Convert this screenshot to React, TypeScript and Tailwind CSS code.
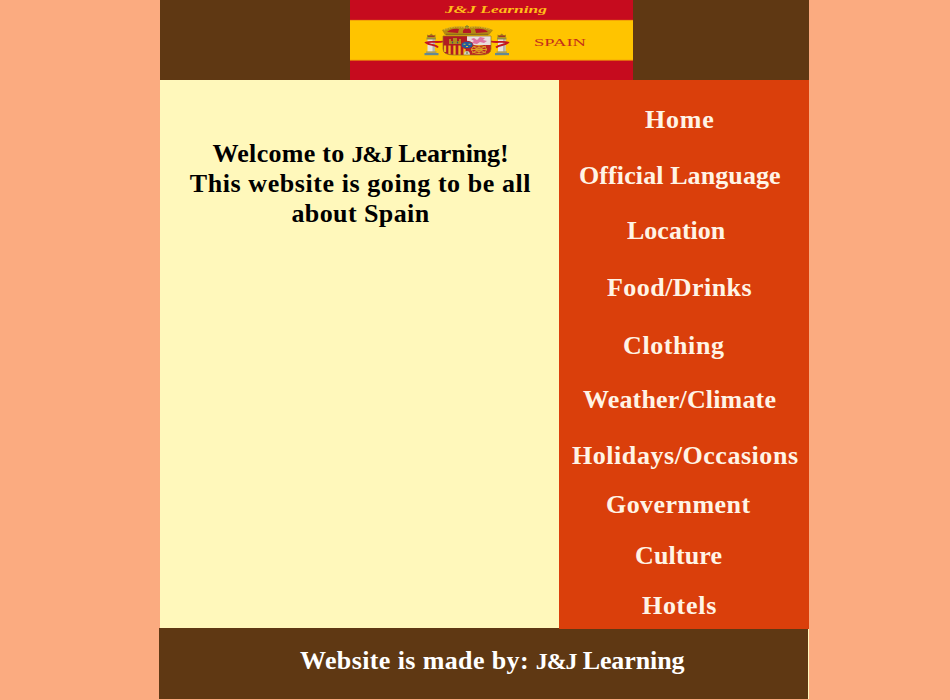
const navItems = [
  { label: 'Home', place: 'mt-[25px] pl-[86px] tracking-[0.8px]' },
  { label: 'Official Language', place: 'mt-[26px] pl-[20px] tracking-[0.1px]' },
  { label: 'Location', place: 'mt-[25px] pl-[68px]' },
  { label: 'Food/Drinks', place: 'mt-[27px] pl-[48px] tracking-[0.45px]' },
  { label: 'Clothing', place: 'mt-[28px] pl-[64px] tracking-[0.6px]' },
  { label: 'Weather/Climate', place: 'mt-[24px] pl-[24px] tracking-[0.17px]' },
  { label: 'Holidays/Occasions', place: 'mt-[26px] pl-[13px] tracking-[0.55px]' },
  { label: 'Government', place: 'mt-[19px] pl-[47px] tracking-[0.45px]' },
  { label: 'Culture', place: 'mt-[21px] pl-[76px] tracking-[0.15px]' },
  { label: 'Hotels', place: 'mt-[20px] pl-[83px] tracking-[0.7px]' },
];

function Pillar() {
  return (
    <g>
      <rect x="4" y="9" width="7.5" height="13" fill="#e6e3dc" />
      <rect x="9" y="9" width="2.5" height="13" fill="#b5b5b0" />
      <rect x="3" y="7.5" width="9.5" height="2" fill="#98903f" />
      <path d="M3.5 7.5V4.5L5.5 5.5L7.8 3.5L10 5.5L12 4.5V7.5Z" fill="#a88418" />
      <path d="M4.5 6.2H11" stroke="#a3152b" strokeWidth="1" />
      <rect x="2.5" y="21.3" width="10.5" height="1.7" fill="#b1a052" />
      <rect x="1" y="23" width="14" height="2.2" fill="#628995" />
    </g>
  );
}

function Flag() {
  return (
    <svg className="block h-20 w-[283px]" viewBox="0 0 283 80">
      <rect width="283" height="80" fill="#c60b1e" />
      <rect y="20" width="283" height="40.3" fill="#ffc400" />
      <path d="M0 20.3H283M0 60.2H283" stroke="#ee8b0b" strokeWidth="0.7" />
      <text x="95" y="13" textLength="102" lengthAdjust="spacingAndGlyphs" fill="#ffbd1a" className="font-['Liberation_Serif',serif] text-[10px] font-bold italic">J&amp;J Learning</text>
      <text x="184" y="46.3" textLength="52" lengthAdjust="spacingAndGlyphs" fill="#c52f1b" className="font-['Liberation_Serif',serif] text-[10px] font-normal">SPAIN</text>
      <g transform="translate(73.5 30)"><Pillar /></g>
      <g transform="translate(144 30)"><Pillar /></g>
      <g fill="none" stroke="#c4161f" strokeWidth="1.8">
        <path d="M93 41.5C88 42.8 80 41 76 42.5C79 45.5 86 44.5 88 47.5" />
        <path d="M141 41.5C146 42.8 154 41 158 42.5C155 45.5 149 44.5 146 47.5" />
      </g>
      {/* crown */}
      <path d="M95 35L92 30Q103 25 117 27Q132 25 143 30L139 35Z" fill="#b58a12" />
      <path d="M97 32Q102 28 109 29L108 33ZM113 33Q112 29 117 28Q122 29 121 33ZM126 33L125 29Q134 28 138 32Z" fill="#b51823" />
      <path d="M94 30Q104 25 117 28Q131 25 141 30" fill="none" stroke="#d6b12b" strokeDasharray="1.5 1" strokeWidth="1.4" />
      <path d="M96 34.5H138" stroke="#8f701b" strokeWidth="1.5" />
      <path d="M117 25V29M115 26.5H119" stroke="#8d8a27" strokeWidth="1.2" />
      {/* quartered shield */}
      <path d="M93 36H117V55H104Q93 55 93 49Z" fill="#b21b22" />
      <path d="M117 36H141V49Q141 55 130 55H117Z" fill="#bd2423" />
      <path d="M117 36H141V45H117Z" fill="#e8dedc" />
      <path d="M95 45.5V52M99.5 45.5V54.5M104.5 45.5V55M109.5 45.5V55M114.5 47V55" stroke="#f0bb18" strokeWidth="2.3" />
      <path d="M99 44V39H101V41H103V38H107V41H109V39H111V44Z" fill="#b38a18" />
      <path d="M102.5 43.5V41.5M107.5 43.5V41.5" stroke="#3f5260" strokeWidth="1.3" />
      <path d="M121 43L124 41L121 39L124 38L127 40L130 37L135 38L133 40L137 41L134 43L130 42L127 44Z" fill="#df73a1" />
      <g fill="none" stroke="#dda323">
        <ellipse cx="129" cy="49.5" rx="7.5" ry="4" />
        <ellipse cx="129" cy="49.5" rx="3.5" ry="2" />
        <path d="M122 46L136 53M136 46L122 53M129 45V54M121 49.5H137" />
      </g>
      <ellipse cx="117" cy="45" rx="6" ry="3.7" fill="#225b9b" stroke="#a62231" />
      <path d="M113.5 44.2H115.5M118.5 44.2H120.5M116 46.5H118" stroke="#d8c13d" strokeWidth="1.1" />
      <path d="M114 55Q114 51 117 51Q120 51 120 55Z" fill="#d4d1bf" />
      <path d="M117 51.5V54" stroke="#527441" />
      <path d="M93 36H141V49Q141 55 130 55H104Q93 55 93 49Z" fill="none" stroke="#97731d" strokeWidth="0.7" />
    </svg>
  );
}

export default function App() {
  return (
    <div className="h-[700px] overflow-hidden bg-[#fbab80] font-['Liberation_Serif',serif] text-[26px] leading-[30px] font-bold">
      <div className="ml-[160px] h-[699px] w-[649px] bg-[#fff8bb]">
        <header className="flex h-20 bg-[#5f3813] pl-[190px]"><Flag /></header>
        <div className="flex h-[549px]">
          <main className="w-[399px] pt-[59px] text-center whitespace-nowrap text-black">
            <h1>
              <span className="block pl-[2px]"><span className="tracking-[0.3px]">Welcome to </span><span className="text-[24px] leading-none tracking-[-1.2px]">J&amp;J</span><span className="tracking-[-0.1px]"> Learning!</span></span>
              <span className="block pl-[2px] tracking-[0.57px]">This website is going to be all</span>
              <span className="block pl-[2px] tracking-[0.4px]">about Spain</span>
            </h1>
          </main>
          <nav className="relative z-10 flex w-[250px] flex-col bg-[#da3f0b] whitespace-nowrap text-[#fff4e6]">
            {navItems.map(({ label, place }) => <a key={label} className={place}>{label}</a>)}
          </nav>
        </div>
        <footer className="-mt-px -ml-px h-[71px] w-[649px] bg-[#5f3813] pt-[18px] pl-[141px] whitespace-nowrap text-white">
          <span className="tracking-[0.38px]">Website is made by: </span><span className="text-[24px] leading-none tracking-[-1.2px]">J&amp;J</span><span className="tracking-[-0.1px]"> Learning</span>
        </footer>
      </div>
    </div>
  );
}
